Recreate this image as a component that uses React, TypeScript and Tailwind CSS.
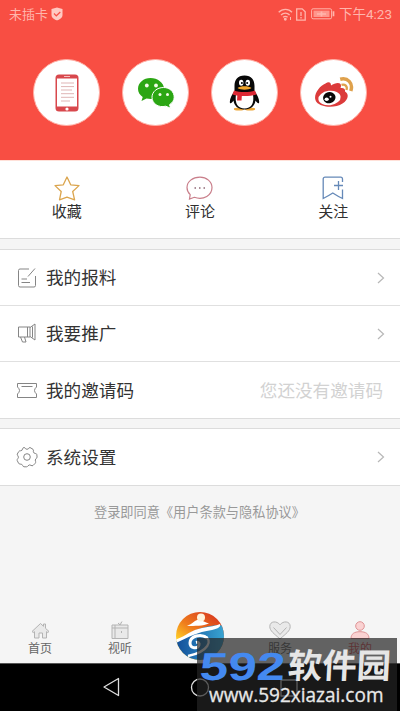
import type { ReactNode } from "react";

function StatusBar() {
  return (
    <div className="flex h-7 items-center pl-[9px] pr-[8px] text-[13px] leading-none text-[#ffb5ac]">
      <span>未插卡</span>
      <svg className="ml-[3px] h-[14px] w-[12px]" viewBox="0 0 12 14">
        <path d="M6 .5 11.5 2v6c0 3-3 4.500-5.500 5.500C3.500 12.500.5 11 .5 8V2z" fill="#ffc9c2" />
        <path d="m3 6.500 2.300 2.300 4-3.800" fill="none" stroke="#f85046" strokeWidth="1.200" />
      </svg>
      <svg className="ml-auto h-[13px] w-[15px]" viewBox="0 0 15 13" fill="none" stroke="#ffb5ac" strokeWidth="1.300">
        <path d="M.7 4.300c3.800-4 9.800-4 13.300 0M3 7c2.600-2.600 6.300-2.600 8.600 0M5 9.300c1.600-1.300 3.200-1.300 4.600 0" />
        <circle cx="7.300" cy="11.300" r=".8" fill="#ffb5ac" />
        <path d="M12.500 9v3" strokeWidth="1" />
      </svg>
      <svg className="ml-[3px] h-[13px] w-[10px]" viewBox="0 0 10 13" fill="none" stroke="#ffb5ac" strokeWidth="1.300">
        <path d="M.7.8h5.500l3 3v8.400H.7zM5 4v4M5 9v1.500" />
      </svg>
      <svg className="ml-[5px] h-[12px] w-[24px]" viewBox="0 0 24 12" fill="none" stroke="#ffb5ac">
        <rect x=".6" y=".8" width="20" height="10" rx="1.500" />
        <rect x="2.500" y="2.600" width="16" height="6.400" fill="#ff968c" stroke="none" />
        <path d="M6 6h9M10.500 3.500v5M22.500 3.300v5" strokeWidth="1.700" />
      </svg>
      <span className="ml-[4px] pt-[2px] text-[13.500px]">下午4:23</span>
    </div>
  );
}

function Phone() {
  return (
    <svg width="24" height="38" viewBox="0 0 24 38">
      <rect x=".5" y=".5" width="23" height="37" rx="3.500" fill="#d8484d" />
      <path d="M2 4.500h20v28H2z" fill="#fff" />
      <path d="M9 2.500h6" stroke="#f5c0c0" />
      <circle cx="12" cy="35" r="1.600" fill="#fff" />
      <path d="M6 9h13M6 12.600h13M6 16h11M6 19.700h13M6 23.300h13M6 27h9" stroke="#dfb5b5" />
    </svg>
  );
}

function Wechat() {
  return (
    <svg width="38" height="32" viewBox="0 0 38 32">
      <path d="M13.500 1C6.500 1 1 5.800 1 11.800c0 3.500 1.800 6.300 4.700 8.200L4.500 24l5-2.500c9 2 17.500-2.500 17.500-9.700C27 5.800 20.500 1 13.500 1z" fill="#2ba613" />
      <path d="M26.500 10.500c-6.500 0-11.500 4.300-11.500 9.700 0 6.400 6.500 10.800 13.700 9l5 2-1.200-3.500c3-2 4.700-4.500 4.700-7.500 0-5.400-4.500-9.700-10.700-9.700z" fill="#2ba613" stroke="#fff" />
      <g fill="#f4fbe9">
        <circle cx="9.800" cy="8.500" r="1.900" />
        <circle cx="19" cy="8.500" r="1.900" />
        <circle cx="23" cy="17.500" r="1.500" />
        <circle cx="30.500" cy="17.500" r="1.500" />
      </g>
    </svg>
  );
}

function Penguin() {
  return (
    <svg width="31" height="36" viewBox="0 0 31 36">
      <ellipse cx="10" cy="34" rx="5.200" ry="1.500" fill="#eca537" />
      <ellipse cx="21" cy="34" rx="5.200" ry="1.500" fill="#eca537" />
      <path d="M15.500.5C8.500.5 5.500 5 5.500 11v5C2.500 20 .2 25 1 28c1 1 2.500-1 3.500-2.500.5 5 4.500 9 11 9s10.500-4 11-9c1 1.500 2.500 3.500 3.500 2.500.8-3-1.500-8-4.500-12v-5c0-6-3-10.500-10-10.500z" fill="#080808" />
      <path d="M7 19.500c-1.500 9 2 14 8.500 14s10-5 8.500-14z" fill="#fff" />
      <path d="M5 15.500c6 2 15 2 21 0l1.500 4c-7 2-17 2-24 0z" fill="#dc2834" />
      <path d="M8.500 18.500h4.500l-.5 7H8z" fill="#dc2834" />
      <ellipse cx="12.200" cy="7.800" rx="2.200" ry="3" fill="#fff" />
      <ellipse cx="18.800" cy="7.800" rx="2.200" ry="3" fill="#fff" />
      <circle cx="12.900" cy="8" r="1" />
      <circle cx="18.200" cy="8" r="1" />
      <path d="M8.500 13c3-2.200 11-2.200 14 0-3 2.300-11 2.300-14 0z" fill="#f3a62a" />
    </svg>
  );
}

function Weibo() {
  return (
    <svg width="40" height="32" viewBox="0 0 40 32">
      <path d="M11.500 6.500c3-2 5.500-1.500 5.500 2 3-2 7-3.500 9-2 1.500 1.200 1 3 .5 4.500 3-.5 5 .5 4.500 3.500 5 3 2.500 9-2.500 12-7 4.700-21 4.500-26-1.500C-2 19 5 9 11.500 6.500z" fill="#dc3b3b" />
      <ellipse cx="15.500" cy="21" rx="11.200" ry="7.200" transform="rotate(-7 15.500 21)" fill="#fff" />
      <ellipse cx="15.300" cy="20.700" rx="6.300" ry="5.600" transform="rotate(-15 15.300 20.700)" fill="#090909" />
      <ellipse cx="12.700" cy="22.300" rx="2.100" ry="1.800" fill="#fff" />
      <circle cx="16.500" cy="19.700" r="1" fill="#fff" />
      <path d="M26.200 2.300C33.500.3 39.500 6 36.800 14" fill="none" stroke="#dfa14c" strokeWidth="3.500" />
      <path d="M27.500 7.800c3.600-1 6.200 1.500 5 5.200" fill="none" stroke="#dfa14c" strokeWidth="2.300" />
    </svg>
  );
}

function LoginButton({ children }: { children: ReactNode }) {
  return (
    <div className="flex size-[67px] items-center justify-center rounded-full border border-[#ffb0a6] bg-white">
      {children}
    </div>
  );
}

function QuickLink({ label, children }: { label: string; children: ReactNode }) {
  return (
    <div className="flex flex-1 flex-col items-center pt-[14px]">
      <div className="flex h-[26px] items-center">{children}</div>
      <p className="mt-[1px] text-[15px] leading-[20px] text-[#303030]">{label}</p>
    </div>
  );
}

function Row({ label, icon, note }: { label: string; icon: ReactNode; note?: string }) {
  return (
    <div className="flex h-[56px] items-center pl-[16px] pr-[15px] text-[17.600px]">
      <svg className="h-[22px] w-[22px] shrink-0" viewBox="0 0 22 22" fill="none" stroke="#858585" strokeWidth="1">
        {icon}
      </svg>
      <span className="ml-[8px] pt-[2px] text-[#333]">{label}</span>
      {note ? (
        <span className="ml-auto mr-[2px] pt-[2px] text-[#d2d2d2]">{note}</span>
      ) : (
        <svg className="ml-auto h-[12px] w-[8px]" viewBox="0 0 8 12" fill="none" stroke="#b7b7b7" strokeWidth="1.200">
          <path d="m1 1 5.500 5L1 11" />
        </svg>
      )}
    </div>
  );
}

function Tab({ label, active, children }: { label: string; active?: boolean; children: ReactNode }) {
  return (
    <div className="flex w-20 flex-col items-center pt-[19px]">
      <svg
        className="h-[20px] w-[22px]"
        viewBox="0 0 22 20"
        fill={active ? "#fad2d2" : "#e9e9e9"}
        stroke={active ? "#df9496" : "#b3b3b3"}
        strokeWidth="1"
      >
        {children}
      </svg>
      <p className={active ? "mt-px text-[12px] leading-[16px] text-[#e55c62]" : "mt-px text-[12px] leading-[16px] text-[#666]"}>
        {label}
      </p>
    </div>
  );
}

function Logo() {
  return (
    <svg width="50" height="50" viewBox="0 0 50 50">
      <defs>
        <linearGradient id="sky" x1="0" y1="1" x2=".7" y2="0">
          <stop offset=".3" stopColor="#ffd126" />
          <stop offset=".6" stopColor="#ef7d1d" />
          <stop offset="1" stopColor="#d93c1e" />
        </linearGradient>
        <linearGradient id="sea">
          <stop offset="0" stopColor="#124d98" />
          <stop offset="1" stopColor="#39a5d3" />
        </linearGradient>
        <clipPath id="disc">
          <circle cx="25" cy="25" r="24" />
        </clipPath>
      </defs>
      <g clipPath="url(#disc)">
        <path d="M0 0h50v50H0z" fill="url(#sky)" />
        <path d="M0 31C12 24 18 19 30 16c9-2 15-2 20-1v35H0z" fill="url(#sea)" />
        <path d="M0 29c11-4 16-10 27-12 8-1.500 14-2 18-4 1 3-2 5-8 6C22 21 14 26 1 32z" fill="#fff" />
        <path d="M12 15c6-2 8-7 13-6 3 .6 6 3 9 3.500-6 2.500-14 2.500-22 2.500z" fill="#fff" />
        <circle cx="26" cy="6.500" r="4" fill="#fff3dd" />
        <path d="M32 27c-6-5-17-2-17 5 0 6 8 6 9 2 .6-2-1-3-3-2.500" fill="none" stroke="#fff" strokeWidth="3" />
        <path d="M29 25c10 4 4 16-16 20" fill="none" stroke="#fff" strokeWidth="2.300" />
      </g>
    </svg>
  );
}

function Watermark() {
  return (
    <div className="absolute left-[197px] top-[638px] h-[73px] w-[200px] overflow-hidden whitespace-nowrap bg-[#242424]/70">
      <span className="absolute left-[3px] top-[10px] origin-left -skew-x-3 scale-x-[1.310] font-['Liberation_Sans'] text-[39px] font-bold leading-[38px] text-[#4489f0]">
        592
      </span>
      <span className="absolute left-[91px] top-[11px] origin-left -skew-x-3 scale-x-[1.010] text-[34px] font-bold leading-[34px] text-[#e6e6e6]">
        软件园
      </span>
      <span className="absolute left-[12px] top-[46px] origin-left scale-x-[0.970] font-['Open_Sans'] text-[19.600px] leading-[22px] text-[#e8e8e8] [-webkit-text-stroke:0.300px_#e8e8e8]">
        www.592xiazai.com
      </span>
    </div>
  );
}

export default function App() {
  return (
    <div className="relative flex h-[711px] w-[400px] flex-col overflow-hidden bg-[#f5f5f5] font-['Roboto','Noto_Sans_CJK_SC',sans-serif]">
      <header className="h-[160px] bg-[#f84e43]">
        <StatusBar />
        <div className="flex justify-between pl-[33px] pr-[33px] pt-[31px]">
          <LoginButton><Phone /></LoginButton>
          <LoginButton><Wechat /></LoginButton>
          <LoginButton><Penguin /></LoginButton>
          <LoginButton><Weibo /></LoginButton>
        </div>
      </header>

      <section className="flex h-[79px] border-b border-t border-b-[#dcdcdc] border-t-[#ffe1d9] bg-white">
        <QuickLink label="收藏">
          <svg width="26" height="25" viewBox="0 0 26 25" fill="none" stroke="#dba54e" strokeWidth="1.300" strokeLinejoin="round">
            <path d="m13 1 3.700 7.800 8.300.8-6.300 5.900 1.900 8.300-7.600-2.600-7.500 2.600 1.700-8.300L1 9.600l8.300-.8z" />
          </svg>
        </QuickLink>
        <QuickLink label="评论">
          <svg width="27" height="24" viewBox="0 0 27 24" fill="none" stroke="#c97e8a" strokeWidth="1.200">
            <path d="M14 1.200C6.500 1.200 1 5.500 1 11.500c0 3 1.500 5.500 3.200 7.200L3.500 23l4.800-1.700C18 24.500 26 19 26 11.500 26 5.500 20.500 1.200 14 1.200z" />
            <path d="M8.500 12h1.500M13 12h1.500M17.500 12H19" stroke="#8e6876" strokeWidth="1.500" />
          </svg>
        </QuickLink>
        <QuickLink label="关注">
          <svg width="22" height="24" viewBox="0 0 22 24" fill="none" stroke="#6589b8" strokeWidth="1.300">
            <path d="M20.500 6V3c0-1-.7-1.800-1.800-1.800H3C2 1.200 1.200 2 1.200 3v19.500c3-1.500 6.500-3.500 9.600-5.500 3.500 2.300 6.500 4 9.700 5.500V13.500M12 9.500h9M16.500 5v9" />
          </svg>
        </QuickLink>
      </section>

      <section className="mt-[10px] divide-y divide-[#e0e0e0] border-y border-[#dcdcdc] bg-white">
        <Row label="我的报料" icon={<path d="M13 2H4Q2.500 2 2.500 3.500v15Q2.500 20 4 20h14q1.500 0 1.500-1.500V9M19 1.500l-7 8M5.500 12h5.500M5.500 15.500h8.500" />} />
        <Row label="我要推广" icon={<path d="M2.500 4H14v10H2.500zM11.500 4v10M14 4.500l5-3.500v16l-5-3.500M16.500 3.500v11M4.500 14l2 5H10l-1.500-5" />} />
        <Row label="我的邀请码" note="您还没有邀请码" icon={<path d="M1.500 4.500h19V8q-4 3.500 0 7v3.500h-19V15q4-3.500 0-7zM5.500 7.500h11" />} />
      </section>

      <section className="mt-[9px] border-y border-[#dcdcdc] bg-white">
        <Row
          label="系统设置"
          icon={
            <>
              <path d="M8 1.500q1 0 1.500 1.200Q11 4 12.500 2.700 13 1.500 14 1.500l3 1.800q.8.700.3 2 0 2 2 2.200 1.300 0 1.500 1l.3 2.500q0 1-1 1.500-1.500 1.500-.5 3 .3 1-.4 1.800L17 19.500q-1 .7-2-.2-1.800-1-3 .5-.5 1-1.500 1H8q-1-.2-1.300-1.200-.7-1.800-2.500-1.500-1.300 0-1.700-1L1.200 14.500q-.3-1 .6-1.800 1.400-1.500 0-3-.8-.7-.5-1.700L2.800 5.500q.5-.8 1.600-.7 2 0 2.200-2Q7 1.500 8 1.500z" />
              <circle cx="11" cy="11" r="3.300" />
            </>
          }
        />
      </section>

      <p className="ml-[94px] mt-[17px] whitespace-nowrap text-[13.200px] leading-[20px] text-[#999]">登录即同意《用户条款与隐私协议》</p>

      <div className="mt-auto">
        <nav className="flex h-[62px]">
          <Tab label="首页">
            <path d="M3 11.500 11.500 3.500l3 2.800V4h2v4.300l3.500 3.200-1.200 1-1.300-.8V18h-4v-5H10v5H5.500v-6.300l-1.300.8z" />
          </Tab>
          <Tab label="视听">
            <path d="M3 5h16v13.500H3zM9 3l2 2 2-3.500M12.500 11v2M3 8h16M6 5v13" />
          </Tab>
          <div className="-mt-[17px] flex w-20 justify-center pt-[27px]">
            <Logo />
          </div>
          <Tab label="服务">
            <path d="M11 19C5 13.500.8 11 .8 6.500.8.8 8 .6 11 4.800 14 .6 21.200.8 21.200 6.500c0 4.500-4.200 7-10.200 12.500z" />
            <path d="m4.500 7.500 6.500 7 6.500-7" fill="none" />
          </Tab>
          <Tab label="我的" active>
            <circle cx="11" cy="6" r="4.300" />
            <path d="M2 18.500c0-4.500 3-6.800 9-6.800s9 2.300 9 6.800z" />
          </Tab>
        </nav>
        <div className="h-[48px] border-t border-[#555] bg-black">
          <svg width="400" height="47" viewBox="0 0 400 47" fill="none" stroke="#ddd" strokeWidth="1.300" strokeLinejoin="round">
            <path d="m104 23 14.500-8.500v17z" />
            <circle cx="200" cy="23.500" r="8.500" />
            <path d="M281 16h16v16h-16z" />
          </svg>
        </div>
      </div>

      <Watermark />
    </div>
  );
}
